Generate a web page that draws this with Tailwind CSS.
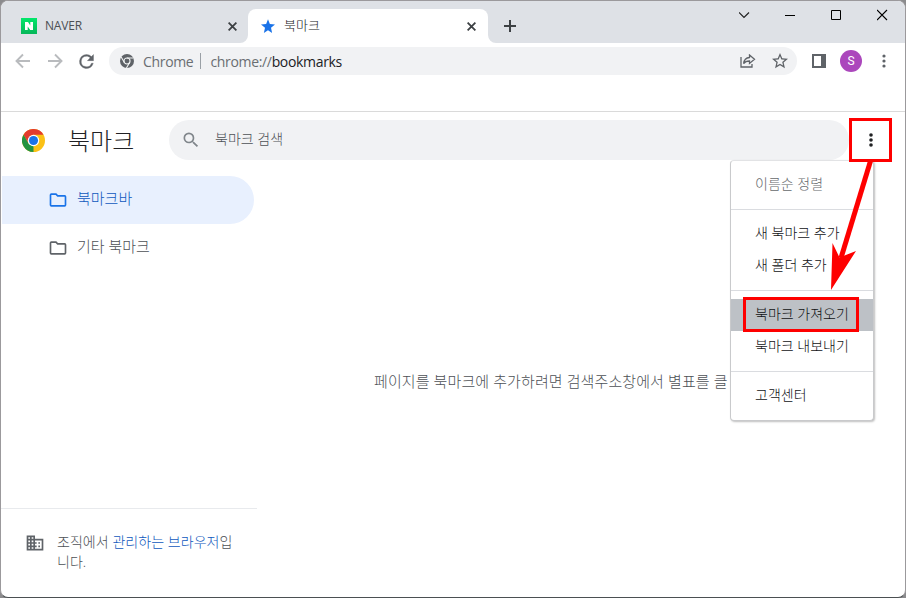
<!DOCTYPE html>
<html lang="ko">
<head>
  <meta charset="UTF-8">
  <meta name="viewport" content="width=device-width, initial-scale=1.0">
  <title>북마크</title>
  <script src="https://cdn.jsdelivr.net/npm/@tailwindcss/browser@4"></script>
</head>
<body class="w-[906px] h-[598px] overflow-hidden bg-[#8b8b8d] font-['Open_Sans','Noto_Sans_CJK_KR',sans-serif] font-light text-[#2c3033] whitespace-nowrap">
  <div class="relative w-full h-full flex flex-col border border-[#9b999c] border-b-[#4b5052] rounded-lg bg-white overflow-hidden">

    <!-- Tabs -->
    <div class="h-[42px] shrink-0 flex bg-[#dee1e6] pt-2">
      <div class="w-[247px] flex items-center pl-5 pr-[11px] bg-[#dee1e6]">
        <svg class="w-4 h-4" viewBox="0 0 16 16">
          <defs><linearGradient id="naver" x1="0" y1="0" x2="0" y2="1"><stop offset="0" stop-color="#03e76b"/><stop offset="1" stop-color="#06b659"/></linearGradient></defs>
          <path fill="url(#naver)" d="M0 0h16v16H0z"/>
          <path fill="#fff" d="M4 4h3l2.300 3.500V4H12v8H9.200L6.700 8.500V12H4z"/>
        </svg>
        <span class="ml-2 text-[12px] font-normal tracking-[-0.2px] text-[#4b4f53]">NAVER</span>
        <svg class="ml-auto w-[9px] h-[9px]" viewBox="0 0 9 9" stroke="#3c4043" stroke-width="1.800"><path d="M.6.6l7.800 7.800M8.400.6L.6 8.400"/></svg>
      </div>
      <div class="relative w-[240px] flex items-center pl-3 pr-3 bg-white rounded-t-lg">
        <svg class="absolute -left-2 bottom-0 w-2 h-2" viewBox="0 0 8 8"><path fill="#fff" d="M8 0v8H0a8 8 0 0 0 8-8z"/></svg>
        <svg class="absolute -right-2 bottom-0 w-2 h-2" viewBox="0 0 8 8"><path fill="#fff" d="M0 0v8h8a8 8 0 0 1-8-8z"/></svg>
        <svg class="w-4 h-4" viewBox="0 0 24 24" fill="#1a73e8"><path d="M12 18.300l6.200 4.100-1.700-7.600 6-5-7.700-.7L12 2 9.200 9.100l-7.700.7 6 5-1.700 7.600z"/></svg>
        <span class="ml-2 text-[13px] text-[#202124]">북마크</span>
        <svg class="ml-auto w-[9px] h-[9px]" viewBox="0 0 9 9" stroke="#3c4043" stroke-width="1.800"><path d="M.6.6l7.800 7.800M8.400.6L.6 8.400"/></svg>
      </div>
      <div class="flex items-center pl-4">
        <svg class="w-3 h-3" viewBox="0 0 12 12" stroke="#3c4043" stroke-width="2"><path d="M0 6h12M6 0v12"/></svg>
      </div>
      <div class="ml-auto flex h-3 mr-[17px] gap-[35px] items-center">
        <svg class="w-[11px] h-3" viewBox="0 0 11 12" fill="none" stroke="#222" stroke-width="1.200"><path d="M0 3.500l5 5 5-5"/></svg>
        <svg class="w-[11px] h-3" viewBox="0 0 11 12" stroke="#000"><path d="M0 6.500h10"/></svg>
        <svg class="w-[11px] h-3" viewBox="0 0 11 12" fill="none" stroke="#000"><path d="M.5 1.500h9v9h-9z"/></svg>
        <svg class="w-[11px] h-3" viewBox="0 0 11 12" stroke="#000" stroke-width="1.100"><path d="M0 1l10 10M10 1L0 11"/></svg>
      </div>
    </div>

    <!-- Toolbar -->
    <div class="h-[69px] shrink-0 border-b border-[#dadada] pt-1">
      <div class="flex items-center h-7 pl-[13px] pr-[16px]">
        <svg class="w-[18px] h-4" viewBox="0 0 18 16" fill="none" stroke="#b9bbbe" stroke-width="1.900"><path d="M16 8H3M9 1.500L2.500 8 9 14.500"/></svg>
        <svg class="w-[18px] h-4 ml-[14px]" viewBox="0 0 18 16" fill="none" stroke="#b9bbbe" stroke-width="1.900"><path d="M2 8h13M9 1.500L15.500 8 9 14.500"/></svg>
        <svg class="w-[21px] h-[21px] ml-[12px]" viewBox="0 0 24 24" fill="#5f6368" stroke="#5f6368" stroke-width=".4"><path d="M17.650 6.350A7.958 7.958 0 0 0 12 4a8 8 0 1 0 7.730 10h-2.080A6 6 0 1 1 12 6c1.660 0 3.140.69 4.220 1.780L13 11h7V4z"/></svg>
        <div class="ml-3 w-[688px] h-7 flex items-center rounded-full bg-[#f1f2f4] pl-[11px] pr-[9px] text-[14px] font-normal tracking-[-0.33px] text-[#6a6e72]">
          <svg class="w-[14px] h-[14px]" viewBox="0 0 24 24">
            <circle cx="12" cy="12" r="12" fill="#5f6368"/>
            <circle cx="12" cy="12" r="5.200" fill="#5f6368" stroke="#f1f3f4" stroke-width="1.900"/>
            <path stroke="#f1f3f4" stroke-width="1.900" fill="none" d="M12 6.800h11M7.500 14.600L2 5.100M16.500 14.600L11 24"/>
          </svg>
          <span class="ml-[9px]">Chrome</span>
          <span class="w-px h-4 bg-[#9aa0a6] ml-[7px] mr-[9px]"></span>
          <span>chrome://<span class="text-[#202124]">bookmarks</span></span>
          <svg class="ml-auto w-4 h-[14px]" viewBox="0 0 16 14" fill="none" stroke="#5f6368" stroke-width="1.300"><path d="M1 3v10h11v-3M9.500 1l5 4.200-5 4.200V7C6.500 7 5 7.600 3.600 9.600 4 6.200 6 3.800 9.500 3.500z"/></svg>
          <svg class="ml-4 w-4 h-4" viewBox="2 2 20 20" fill="#5f6368"><path d="M22 9.240l-7.190-.62L12 2 9.190 8.630 2 9.240l5.460 4.730L5.820 21 12 17.270 18.180 21l-1.630-7.030zM12 15.400l-3.760 2.270 1-4.280-3.320-2.880 4.380-.38L12 6.100l1.710 4.040 4.380.38-3.320 2.880 1 4.280z"/></svg>
        </div>
        <svg class="ml-[15px] w-[14px] h-[14px]" viewBox="0 0 14 14"><path fill="#5f6368" fill-rule="evenodd" d="M0 0h14v14H0zM2 2v10h7V2z"/></svg>
        <div class="ml-[14px] w-[22px] h-[22px] rounded-full bg-[#ab47bc] text-white text-[12px] font-normal flex items-center justify-center font-[Roboto,sans-serif]">S</div>
        <svg class="ml-auto w-[10px] h-[14px]" viewBox="0 0 10 14" fill="#5f6368"><circle cx="5" cy="2" r="1.600"/><circle cx="5" cy="7" r="1.600"/><circle cx="5" cy="12" r="1.600"/></svg>
      </div>
    </div>

    <!-- Page header -->
    <div class="h-14 shrink-0 flex items-center pl-[21px] pr-[17px]">
      <svg class="w-[23px] h-[23px]" viewBox="0 0 48 48">
        <circle cx="24" cy="24" r="24" fill="#fbc116"/>
        <path fill="#e33b2e" d="M3.200 12A24 24 0 0 1 44.800 12H24L13.600 30z"/>
        <path fill="#229342" d="M3.200 12L13.600 30l10.400 6L24 48A24 24 0 0 1 3.200 12z"/>
        <circle cx="24" cy="24" r="12" fill="#fff"/>
        <circle cx="24" cy="24" r="9.500" fill="#1a73e8"/>
      </svg>
      <h1 class="ml-[23px] w-[101px] pt-0.5 text-[24px] text-[#202124]">북마크</h1>
      <div class="w-[680px] h-10 rounded-full bg-[#f1f2f4] flex items-center pl-3">
        <svg class="w-5 h-5" viewBox="0 0 24 24" fill="#80868b"><path d="M15.500 14h-.79l-.28-.27A6.471 6.471 0 0 0 16 9.500 6.500 6.500 0 1 0 9.500 16c1.610 0 3.090-.59 4.230-1.570l.27.28v.79l5 4.990L20.490 19zm-6 0C7.010 14 5 11.990 5 9.500S7.010 5 9.500 5 14 7.010 14 9.500 11.990 14 9.500 14z"/></svg>
        <span class="ml-[14px] -mt-1 text-[14px] text-[#4d5156]">북마크 검색</span>
      </div>
      <svg class="ml-[17px] w-[10px] h-[14px]" viewBox="0 0 10 14" fill="#202124"><circle cx="5" cy="2" r="1.800"/><circle cx="5" cy="7" r="1.800"/><circle cx="5" cy="12" r="1.800"/></svg>
    </div>

    <!-- Sidebar and list -->
    <div class="flex-1 flex">
      <div class="w-[256px] flex flex-col pt-2 text-[15px] text-[#4d5156]">
        <div class="ml-px w-[252px] h-12 flex items-center rounded-r-full bg-[#e8f0fe] pl-[46px] text-[#0f58bd]">
          <svg class="w-5 h-5 -mt-px" viewBox="0 0 24 24" fill="#1a73e8"><path d="M9.170 6l2 2H20v10H4V6zM10 4H4a2 2 0 0 0-2 2v12a2 2 0 0 0 2 2h16a2 2 0 0 0 2-2V8a2 2 0 0 0-2-2h-8z"/></svg>
          <span class="ml-[9px] -mt-1">북마크바</span>
        </div>
        <div class="h-12 flex items-center pl-[47px]">
          <svg class="w-5 h-5 -mt-px" viewBox="0 0 24 24" fill="#5f6368"><path d="M9.170 6l2 2H20v10H4V6zM10 4H4a2 2 0 0 0-2 2v12a2 2 0 0 0 2 2h16a2 2 0 0 0 2-2V8a2 2 0 0 0-2-2h-8z"/></svg>
          <span class="ml-[9px] -mt-1">기타 북마크</span>
        </div>
        <div class="mt-auto h-[89px] border-t border-[#e8eaed] flex pl-6 pt-[23px] text-[14px] leading-5 tracking-[0.05px]">
          <svg class="w-5 h-5 mt-px" viewBox="0 0 24 24" fill="#5f6368"><path d="M12 7V3H2v18h20V7zM6 19H4v-2h2zm0-4H4v-2h2zm0-4H4V9h2zm0-4H4V5h2zm4 12H8v-2h2zm0-4H8v-2h2zm0-4H8V9h2zm0-4H8V5h2zm10 12h-8v-2h2v-2h-2v-2h2v-2h-2V9h8zm-2-8h-2v2h2zm0 4h-2v2h2z"/></svg>
          <p class="ml-3">조직에서 <span class="text-[#0f58bd]">관리하는 브라우저</span>입<br>니다.</p>
        </div>
      </div>
      <div class="flex-1 pl-[117px] pt-[202px] text-[15px] leading-[22px] tracking-[0.1px] text-[#4d5156]">페이지를 북마크에 추가하려면 검색주소창에서 별표를 클</div>
    </div>

    <!-- Menu -->
    <div class="absolute left-[729px] top-[159px] w-[144px] h-[261px] bg-white border border-[#c9cacc] border-t-[#e2e3e5] rounded shadow-[1px_1px_2px_rgba(0,0,0,0.25)] pt-[7px] text-[14px] leading-8 text-[#101114]">
      <div class="pl-6 text-[#66696c]">이름순 정렬</div>
      <div class="h-px bg-[#dadce0] mt-[9px] mb-[7px]"></div>
      <div class="pl-6">새 북마크 추가</div>
      <div class="pl-6">새 폴더 추가</div>
      <div class="h-px bg-[#dadce0] mt-[9px] mb-2"></div>
      <div class="pl-6 bg-[#bdc1c6] leading-[30px] h-8">북마크 가져오기</div>
      <div class="pl-6 leading-[30px] h-8">북마크 내보내기</div>
      <div class="h-px bg-[#dadce0] mt-2 mb-2"></div>
      <div class="pl-6 leading-[30px]">고객센터</div>
    </div>

    <!-- Red marks -->
    <svg class="absolute -left-px -top-px w-[906px] h-[598px]" viewBox="0 0 906 598">
      <g fill="none" stroke="#fe0000">
        <path stroke-width="3" d="M850.500 119.500h40v41h-40zM744.500 298.500h113v32h-113z"/>
        <path stroke-width="5" d="M870.500 161L841 258"/>
      </g>
      <path fill="#fe0000" d="M831 290l1.500-47 7 14.500 16.500-6.500z"/>
    </svg>
  </div>
</body>
</html>
